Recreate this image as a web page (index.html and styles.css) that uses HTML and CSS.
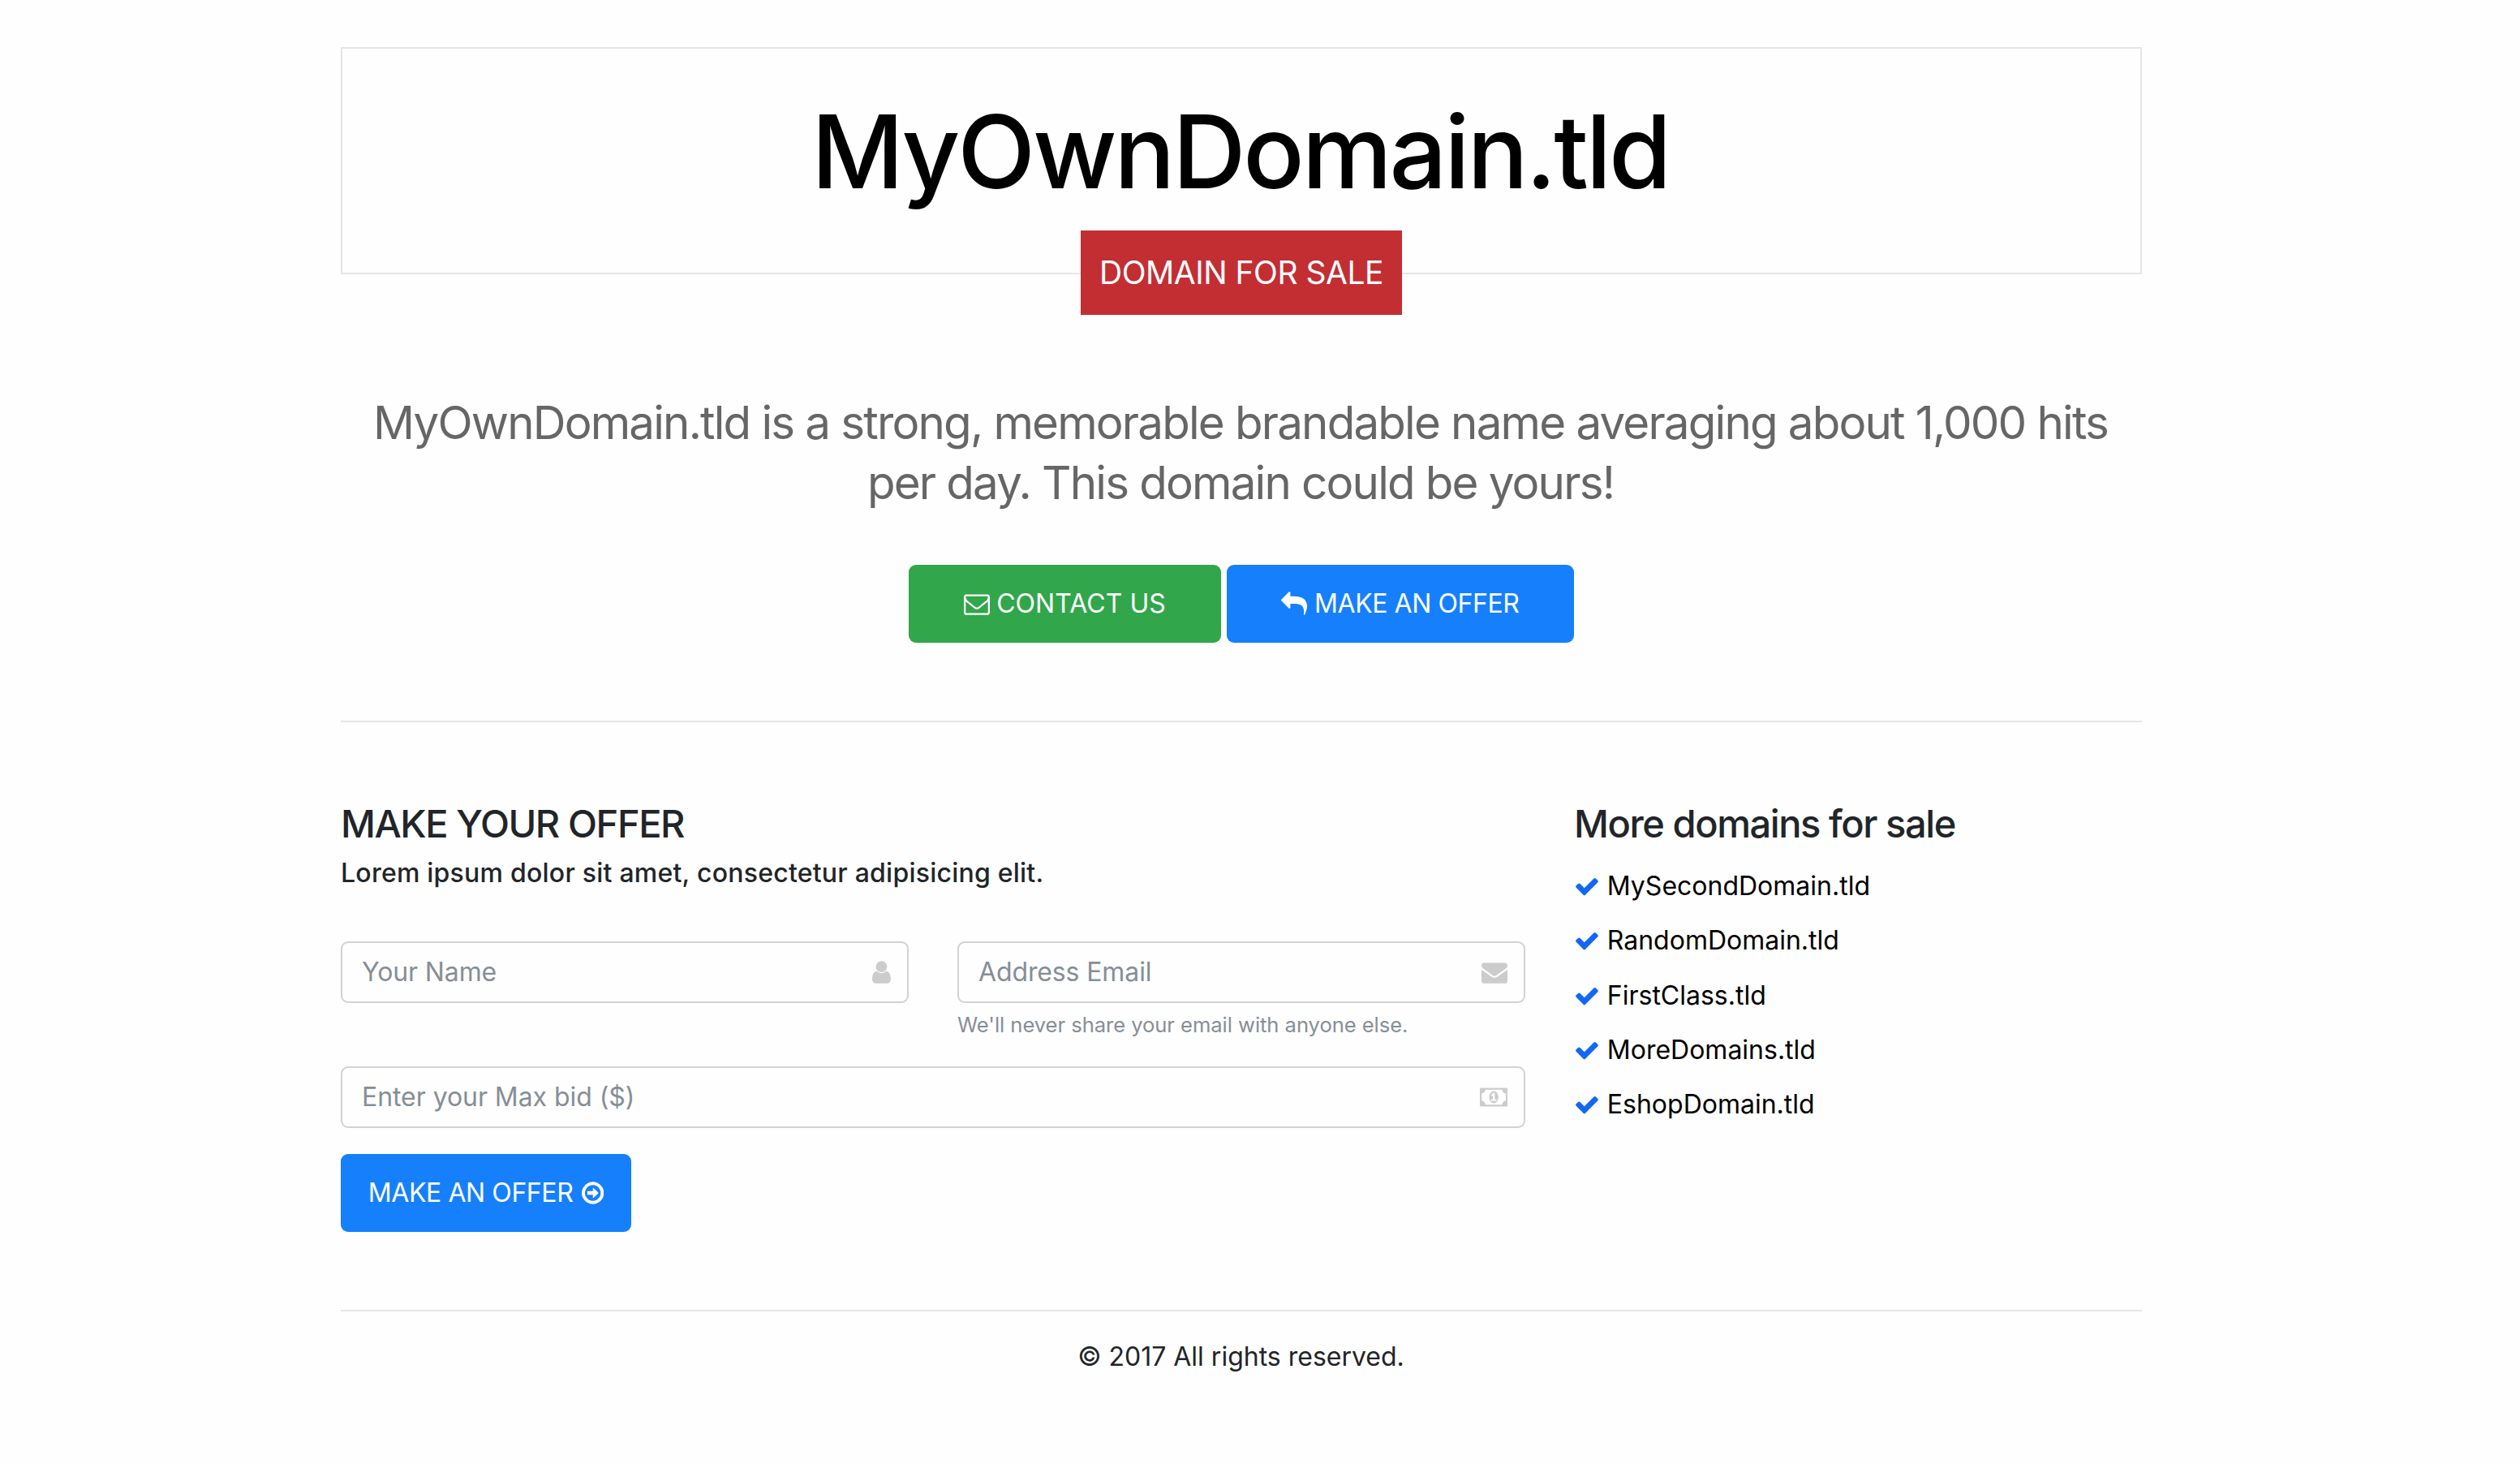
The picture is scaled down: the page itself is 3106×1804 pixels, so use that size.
FILE: index.html
```
<!DOCTYPE html>
<html lang="en">
<head>
<meta charset="utf-8">
<title>MyOwnDomain.tld</title>
<link rel="stylesheet" href="styles.css">
</head>
<body>
<svg class="sprite" aria-hidden="true">
  <symbol id="envelope-o" viewBox="0 0 1792 1792"><path d="M1664 1504v-768q-32 36-69 66-268 206-426 338-51 43-83 67t-86.5 48.5-102.5 24.5h-2q-48 0-102.5-24.5t-86.5-48.5-83-67q-158-132-426-338-37-30-69-66v768q0 13 9.5 22.5t22.5 9.5h1472q13 0 22.5-9.5t9.5-22.5zm0-1051v-24.5l-.5-13-3-12.5-5.5-9-9-7.5-14-2.5h-1472q-13 0-22.5 9.5t-9.5 22.5q0 168 147 284 193 152 401 317 6 5 35 29.5t46 37.5 44.5 31.5 50.5 27.5 43 9h2q20 0 43-9t50.5-27.5 44.5-31.5 46-37.5 35-29.5q208-165 401-317 54-43 100.5-115.5t46.5-131.5zm128-37v1088q0 66-47 113t-113 47h-1472q-66 0-113-47t-47-113v-1088q0-66 47-113t113-47h1472q66 0 113 47t47 113z"/></symbol>
  <symbol id="reply" viewBox="0 0 1792 1792"><path d="M1792 1120q0 166-127 451-3 7-10.5 24t-13.5 30-13 22q-12 17-28 17-15 0-23.5-10t-8.5-25q0-9 2.5-26.5t2.5-23.5q5-68 5-123 0-101-17.5-181t-48.5-138.5-80-101-105.5-69.5-133-42.5-154-21.5-175.5-6h-224v256q0 26-19 45t-45 19-45-19l-512-512q-19-19-19-45t19-45l512-512q19-19 45-19t45 19 19 45v256h224q713 0 875 403 53 134 53 333z"/></symbol>
  <symbol id="envelope" viewBox="0 0 1792 1792"><path d="M1792 710v794q0 66-47 113t-113 47h-1472q-66 0-113-47t-47-113v-794q44 49 101 87 362 246 497 345 57 42 92.5 65.5t94.5 48 110 24.5h2q51 0 110-24.5t94.5-48 92.5-65.5q170-123 498-345 57-39 100-87zm0-294q0 79-49 151t-122 123q-376 261-468 325-10 7-42.5 31t-54 39-52 33.5-57.5 27.5-50 9h-2q-23 0-50-9t-57.5-27.5-52-33.5-54-39-42.5-31q-91-64-262-182.5t-205-142.5q-62-42-117-115.5t-55-136.5q0-78 41.5-130t118.5-52h1472q65 0 112.5 47t47.5 113z"/></symbol>
  <symbol id="user" viewBox="256 0 1280 1792"><path d="M1536 1399q0 109-62.5 187t-150.5 78h-854q-88 0-150.5-78t-62.5-187q0-85 8.5-160.5t31.5-152 58.5-131 94-89 134.5-34.5q131 128 313 128t313-128q76 0 134.5 34.5t94 89 58.5 131 31.5 152 8.5 160.5zm-256-887q0 159-112.5 271.5t-271.5 112.5-271.5-112.5-112.5-271.5 112.5-271.5 271.5-112.5 271.5 112.5 112.5 271.5z"/></symbol>
  <symbol id="money" viewBox="0 0 1920 1792"><path d="M768 1152h384v-96h-128v-448h-114l-148 137 77 80q42-37 55-57h2v288h-128v96zm512-256q0 70-21 142t-59.5 134-101.5 101-138 39-138-39-101.5-101-59.5-134-21-142 21-142 59.5-134 101.5-101 138-39 138 39 101.5 101 59.5 134 21 142zm512 256v-512q-106 0-181-75t-75-181h-1152q0 106-75 181t-181 75v512q106 0 181 75t75 181h1152q0-106 75-181t181-75zm128-832v1152q0 26-19 45t-45 19h-1792q-26 0-45-19t-19-45v-1152q0-26 19-45t45-19h1792q26 0 45 19t19 45z"/></symbol>
  <symbol id="arrow-circle" viewBox="128 0 1536 1792"><path d="M1280 896q0 14-9 23l-320 320q-9 9-23 9-13 0-22.5-9.5t-9.5-22.5v-192h-352q-13 0-22.5-9.5t-9.5-22.5v-192q0-13 9.5-22.5t22.5-9.5h352v-192q0-14 9-23t23-9q12 0 24 10l319 319q9 9 9 23zm160 0q0-148-73-273t-198-198-273-73-273 73-198 198-73 273 73 273 198 198 273 73 273-73 198-198 73-273zm224 0q0 209-103 385.5t-279.5 279.5-385.5 103-385.5-103-279.5-279.5-103-385.5 103-385.5 279.5-279.5 385.5-103 385.5 103 279.5 279.5 103 385.5z"/></symbol>
  <symbol id="check" viewBox="0 0 1792 1792"><path d="M1671 566q0 40-28 68l-724 724-136 136q-28 28-68 28t-68-28l-136-136-362-362q-28-28-28-68t28-68l136-136q28-28 68-28t68 28l294 295 656-657q28-28 68-28t68 28l136 136q28 28 28 68z"/></symbol>
</svg>

<div class="container">
  <header class="masthead">
    <h1 class="domain">MyOwnDomain.tld</h1>
    <span class="badge">DOMAIN FOR SALE</span>
  </header>

  <section class="intro">
    <p class="lead">MyOwnDomain.tld is a strong, memorable brandable name averaging about 1,000 hits<br>per day. This domain could be yours!</p>
    <div class="actions">
      <a class="btn btn-success"><svg class="icon"><use href="#envelope-o"/></svg><span>CONTACT US</span></a>
      <a class="btn btn-primary btn-wide"><svg class="icon"><use href="#reply"/></svg><span class="tight">MAKE AN OFFER</span></a>
    </div>
  </section>

  <main class="columns">
    <section class="offer">
      <h2 class="heading">MAKE YOUR OFFER</h2>
      <p class="subheading">Lorem ipsum dolor sit amet, consectetur adipisicing elit.</p>
      <form class="form">
        <div class="fields">
          <div class="field">
            <input class="input" type="text" placeholder="Your Name">
            <svg class="icon icon-user"><use href="#user"/></svg>
          </div>
          <div class="group">
            <div class="field">
              <input class="input" type="text" placeholder="Address Email">
              <svg class="icon"><use href="#envelope"/></svg>
            </div>
            <small class="help">We'll never share your email with anyone else.</small>
          </div>
        </div>
        <div class="field">
          <input class="input input-bid" type="text" placeholder="Enter your Max bid ($)">
          <svg class="icon icon-money"><use href="#money"/></svg>
        </div>
        <a class="btn btn-primary btn-submit"><span class="tight">MAKE AN OFFER</span><svg class="icon icon-arrow"><use href="#arrow-circle"/></svg></a>
      </form>
    </section>

    <aside class="more">
      <h2 class="heading">More domains for sale</h2>
      <ul class="domains">
        <li><svg class="icon"><use href="#check"/></svg><span>MySecondDomain.tld</span></li>
        <li><svg class="icon"><use href="#check"/></svg><span>RandomDomain.tld</span></li>
        <li><svg class="icon"><use href="#check"/></svg><span>FirstClass.tld</span></li>
        <li><svg class="icon"><use href="#check"/></svg><span>MoreDomains.tld</span></li>
        <li><svg class="icon"><use href="#check"/></svg><span>EshopDomain.tld</span></li>
      </ul>
    </aside>
  </main>

  <footer class="footer">© 2017 All rights reserved.</footer>
</div>
</body>
</html>
```
FILE: styles.css
```
* {
  box-sizing: border-box;
}

body {
  margin: 0;
  background: #fefefe;
  color: #212529;
  font: 420 32px/48px Inter, "Liberation Sans", sans-serif;
}

h1, h2, p, ul {
  margin: 0;
  padding: 0;
}

.sprite {
  display: none;
}

.container {
  width: 2220px;
  margin-left: 420px;
  padding-top: 58px;
}

.icon {
  display: block;
  flex: none;
  width: 32px;
  height: 32px;
  fill: currentColor;
}

/* Masthead */
.masthead {
  position: relative;
  height: 280px;
  padding: 51.5px 3px 0 0;
  border: 2px solid #e5e5e5;
  text-align: center;
}

.domain {
  color: #000;
  font-size: 125px;
  font-weight: 480;
  line-height: 150px;
  letter-spacing: -3.2px;
}

.badge {
  position: absolute;
  top: 224px;
  left: 50%;
  width: 396px;
  margin-left: -198px;
  background: #c22e32;
  color: #fff;
  font-size: 39px;
  line-height: 104px;
  letter-spacing: -0.5px;
}

/* Introduction */
.intro {
  padding: 146px 0 96px;
  border-bottom: 2px solid #e5e5e5;
}

.lead {
  padding-right: 2px;
  color: #666;
  font-size: 56.5px;
  line-height: 74.4px;
  letter-spacing: -1.83px;
  text-align: center;
  white-space: nowrap;
}

.actions {
  display: flex;
  justify-content: center;
  gap: 7.5px;
  margin-top: 63.2px;
}

.btn {
  display: flex;
  align-items: center;
  justify-content: center;
  gap: 8.5px;
  width: 384.5px;
  height: 96px;
  border-radius: 9px;
  color: #fff;
  font-weight: 440;
  letter-spacing: 0.05px;
}

.btn-success {
  background: #31a64a;
}

.btn-primary {
  background: #167ffc;
}

.btn-wide {
  width: 428px;
}

.tight {
  letter-spacing: -0.42px;
}

/* Offer form and domain list */
.columns {
  display: grid;
  grid-template-columns: 1460px 1fr;
  gap: 60px;
  padding: 96px 0;
  border-bottom: 2px solid #e5e5e5;
}

.heading {
  font-size: 47px;
  font-weight: 500;
  line-height: 57.6px;
  letter-spacing: -1.42px;
}

.subheading {
  margin: 13.6px 0 64.4px;
  font-weight: 500;
  line-height: 38.4px;
  letter-spacing: 0.23px;
}

.form {
  display: flex;
  flex-direction: column;
  gap: 32px;
}

.fields {
  display: grid;
  grid-template-columns: 1fr 1fr;
  align-items: start;
  gap: 60px;
}

.field {
  position: relative;
}

.field .icon {
  position: absolute;
  top: 22.5px;
  right: 22px;
  color: #ccc;
}

.input {
  display: block;
  width: 100%;
  height: 76px;
  padding: 0 24px;
  border: 2px solid #d0d2d5;
  border-radius: 9px;
  background: #fefefe;
  font: inherit;
  letter-spacing: -0.12px;
}

.input-bid {
  letter-spacing: -0.06px;
}

.input::placeholder {
  color: #868e96;
  opacity: 1;
}

.field .icon-user {
  width: 22.9px;
}

.field .icon-money {
  width: 34.3px;
}

.help {
  display: block;
  margin-top: 7.6px;
  color: #868e96;
  font-size: 25.6px;
  line-height: 38.4px;
  letter-spacing: -0.06px;
}

.btn-submit {
  gap: 10.5px;
  width: 358px;
}

.icon-arrow {
  width: 27.4px;
}

.domains {
  display: flex;
  flex-direction: column;
  gap: 19.2px;
  margin-top: 24.7px;
  color: #000;
  list-style: none;
}

.domains li {
  display: flex;
  align-items: center;
  gap: 8.8px;
}

.domains .icon {
  color: #1367f3;
}

/* Footer */
.footer {
  padding: 32.3px 1px 0 0;
  text-align: center;
}
```
